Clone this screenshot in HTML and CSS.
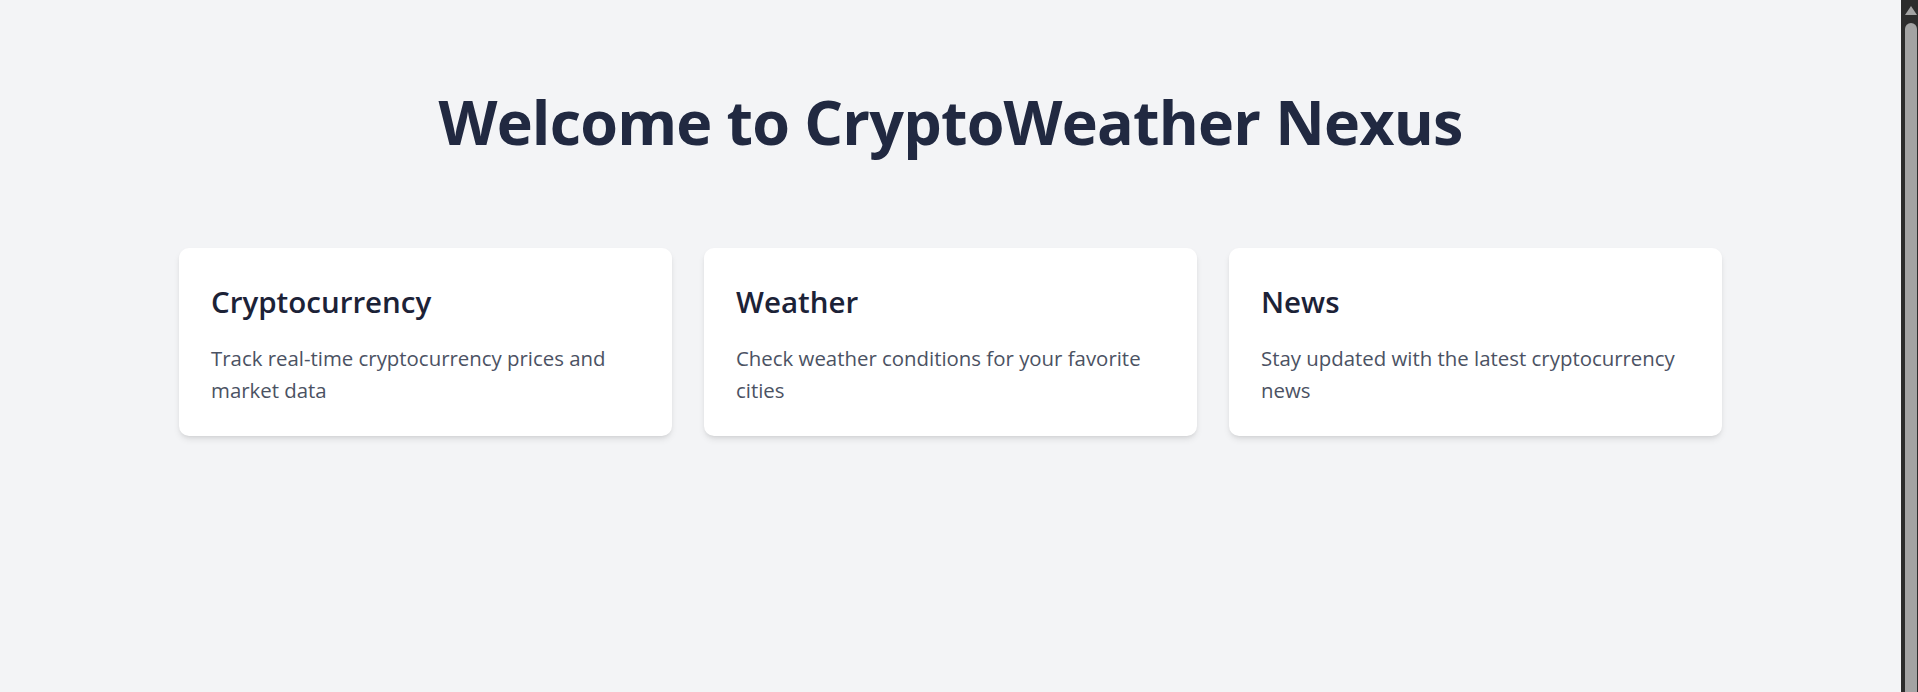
FILE: index.html
```html
<!DOCTYPE html>
<html lang="en">
<head>
<meta charset="utf-8">
<title>CryptoWeather Nexus</title>
<link rel="stylesheet" href="styles.css">
</head>
<body>
<div class="shell">
  <div class="page">
    <main class="container">
      <h1 class="title">Welcome to CryptoWeather Nexus</h1>
      <section class="cards">
        <article class="card">
          <h2 class="card-title">Cryptocurrency</h2>
          <p class="card-text">Track real-time cryptocurrency prices and market data</p>
        </article>
        <article class="card">
          <h2 class="card-title">Weather</h2>
          <p class="card-text">Check weather conditions for your favorite cities</p>
        </article>
        <article class="card">
          <h2 class="card-title">News</h2>
          <p class="card-text">Stay updated with the latest cryptocurrency news</p>
        </article>
      </section>
    </main>
  </div>
  <div class="scrollbar" aria-hidden="true">
    <div class="scroll-arrow"></div>
    <div class="scroll-thumb"></div>
  </div>
</div>
</body>
</html>
```
FILE: styles.css
```css
html {
  background: #f3f4f6;
}
body {
  margin: 0;
  background: #f3f4f6;
  font-family: "Open Sans", "Noto Sans", sans-serif;
  color: #1f2937;
}
.shell {
  display: flex;
  height: 100vh;
  overflow: hidden;
}
.page {
  flex: 1;
  min-width: 0;
  padding: 8px 0;
}
.container {
  max-width: 1543px;
  margin: 0 auto;
  padding-top: 77px;
}
.title {
  margin: 0;
  text-align: center;
  font-size: 61px;
  line-height: 73px;
  font-weight: 700;
  letter-spacing: -0.8px;
  color: #212941;
}
.cards {
  margin-top: 90px;
  display: grid;
  grid-template-columns: repeat(3, 1fr);
  gap: 32px;
}
.card {
  background: #ffffff;
  border-radius: 10px;
  padding: 34px 32px 30px;
  box-shadow: 0 4px 7px -1px rgba(0, 0, 0, 0.1), 0 2px 4px -2px rgba(0, 0, 0, 0.1);
}
.card-title {
  margin: 0;
  font-size: 29.5px;
  line-height: 40px;
  font-weight: 600;
  color: #1c2237;
}
.card-text {
  margin: 21px 0 0;
  font-size: 20.4px;
  line-height: 31.5px;
  color: #4b5263;
}
.scrollbar {
  width: 17px;
  flex: 0 0 17px;
  background: #2c2c2c;
  display: flex;
  flex-direction: column;
  align-items: flex-start;
  padding: 6px 0 0 4px;
  box-sizing: border-box;
}
.scroll-arrow {
  width: 0;
  height: 0;
  border-left: 6px solid transparent;
  border-right: 6px solid transparent;
  border-bottom: 9px solid #a3a3a3;
}
.scroll-thumb {
  margin-top: 8px;
  width: 12px;
  flex: 1;
  margin-bottom: -20px;
  background: #a3a3a3;
  border-radius: 6px 6px 0 0;
}
```
